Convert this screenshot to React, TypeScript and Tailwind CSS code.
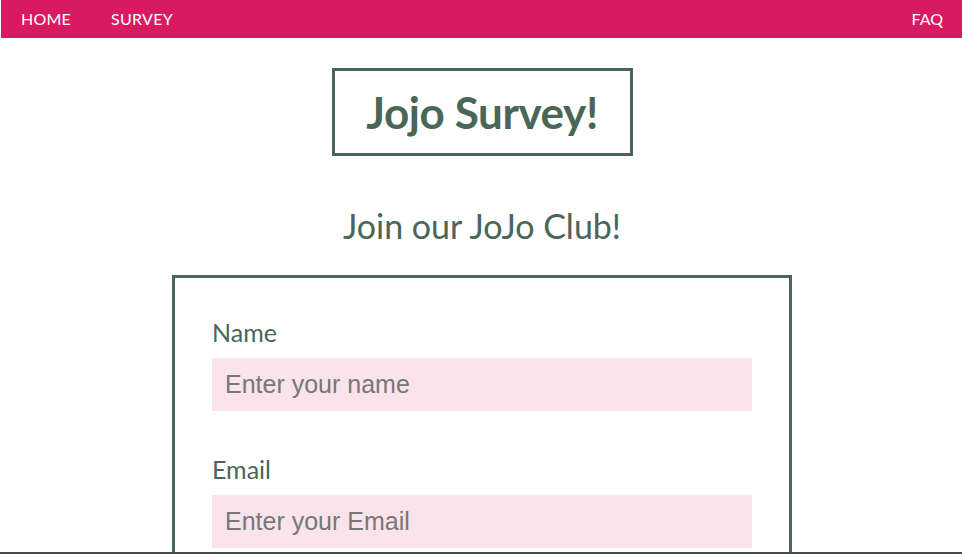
const navLink = "text-white text-base uppercase";

const Field = ({ label, placeholder, type }: { label: string; placeholder: string; type: string }) => (
  <div className="flex flex-col">
    <label className="text-[25px] leading-[30px] text-[#4a6657] mb-[11px]">{label}</label>
    <input
      type={type}
      placeholder={placeholder}
      className="h-[53px] w-full bg-[#fae3ea] px-[13px] text-[25px] text-[#4a6657] placeholder:text-[#777777] outline-none font-['Liberation_Sans',Arial,sans-serif]"
    />
  </div>
);

export default function App() {
  return (
    <div className="min-h-screen bg-white font-['Lato',sans-serif]">
      <nav className="h-[38px] ml-[1px] bg-[#d81b60] flex items-center pl-[20px] pr-[19px]">
        <a className={navLink + " mr-[40px] tracking-[0.2px]"}>Home</a>
        <a className={navLink + " tracking-[0.3px]"}>Survey</a>
        <a className={navLink + " ml-auto"}>FAQ</a>
      </nav>

      <main className="flex flex-col items-center pl-[2px]">
        <h1 className="mt-[30px] w-[301px] h-[88px] border-[3px] border-[#4a6657] flex items-center justify-center text-[44px] font-bold text-[#4a6657] tracking-[-0.4px]">
          Jojo Survey!
        </h1>
        <h2 className="mt-[48px] text-[34px] leading-[44px] text-[#4a6657]">Join our JoJo Club!</h2>

        <form className="mt-[27px] w-[620px] border-[3px] border-[#4a6657] px-[37px] pt-[39px] flex flex-col gap-[43px]">
          <Field label="Name" placeholder="Enter your name" type="text" />
          <Field label="Email" placeholder="Enter your Email" type="email" />
          <div className="h-[40px]" />
        </form>
      </main>

      <div className="fixed bottom-0 left-0 right-0 h-[2px] bg-[#4b4b4b]" />
    </div>
  );
}
